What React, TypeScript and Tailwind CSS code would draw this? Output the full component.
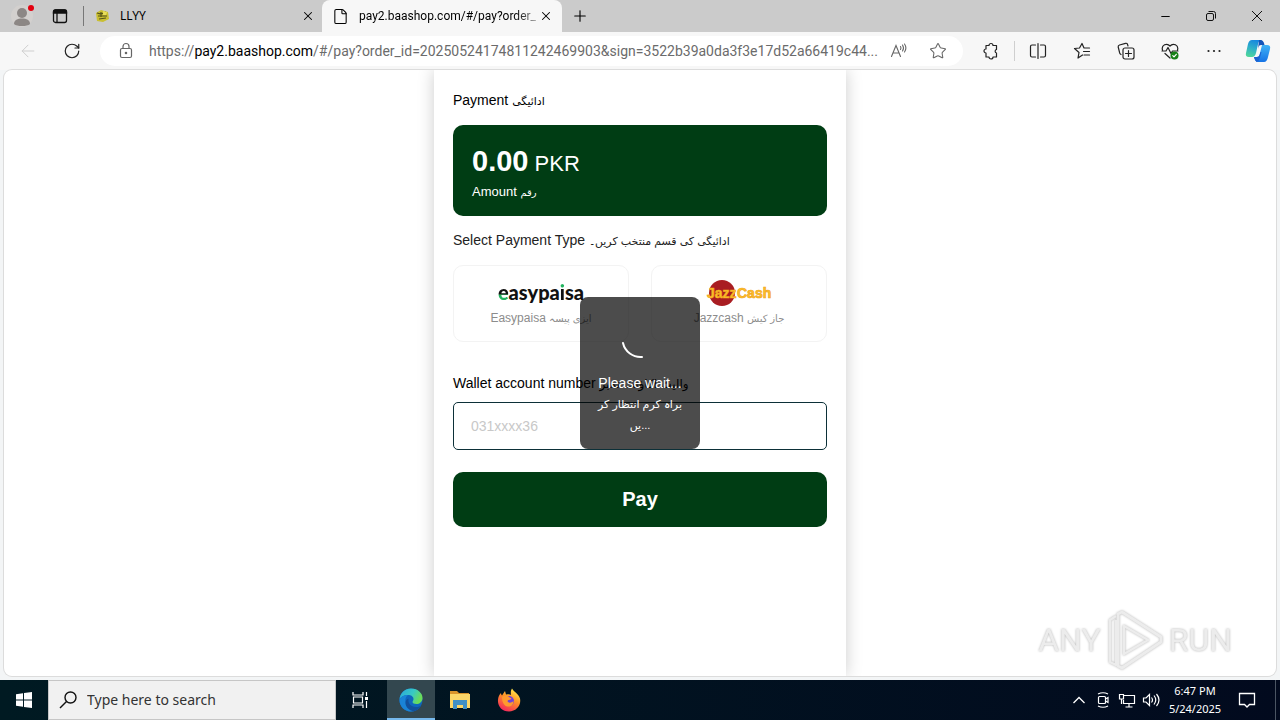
import type { ReactNode } from "react";
import { ArrowLeft, File, Minus, Plus, RotateCw, Star, X } from "lucide-react";

const ui = "font-['Noto_Sans','Open_Sans',sans-serif]";
const app = "font-['Liberation_Sans','DejaVu_Sans',sans-serif]";

function Urdu({ children, className = "text-xs" }: { children: ReactNode; className?: string }) {
  return (
    <span lang="ur" className={className}>
      {children}
    </span>
  );
}

function TitleBar() {
  return (
    <header className="flex h-8 shrink-0 items-stretch bg-[#cbcbcb] text-black">
      <button aria-label="Profile" className="flex w-11 items-center justify-center">
        <svg width="24" height="24" viewBox="0 0 24 24">
          <circle cx="12" cy="12" r="11" fill="#d3d0ce" />
          <circle cx="12" cy="9" r="5" fill="#8c8785" />
          <path d="M4 20c0-4 3.500-5.500 8-5.500s8 1.500 8 5.500c-2.500 2.700-13.500 2.700-16 0z" fill="#8c8785" />
          <circle cx="21" cy="4" r="3" fill="#e3000f" />
        </svg>
      </button>
      <button aria-label="Tab actions" className="flex w-8 items-center justify-center">
        <svg width="16" height="16" viewBox="0 0 16 16" fill="none" stroke="#111" strokeWidth="1.300">
          <rect x="1.500" y="2" width="13" height="12.500" rx="2" />
          <path d="M1.500 3.500q0-1.500 2-1.500h9q2 0 2 1.500V5h-13z" fill="#111" />
          <path d="M5 5v9.500" />
        </svg>
      </button>
      <div className="my-1.5 ml-[7px] w-px bg-[#777]" />
      <div role="tablist" className="flex">
        <div className="flex w-[238px] items-center pr-1.5 pl-2.5">
          <svg width="16" height="16" viewBox="0 0 16 16">
            <path d="M2 5l5-3 7 2 1 7-6 3-6-1z" fill="#c9bf32" />
            <path d="M3 5l4 1 5-2M4 8h9M5 11l7-1M7 4v5" stroke="#55531a" strokeWidth="1.200" fill="none" />
            <path d="M9 3l4 1-1 3-3 0z" fill="#e8dd59" />
          </svg>
          <button role="tab" aria-selected="false" className="ml-2.5 flex-1 text-left text-xs">
            LLYY
          </button>
          <button aria-label="Close LLYY" className="flex size-4 items-center justify-center">
            <X size={14} strokeWidth={1.8} />
          </button>
        </div>
        <div className="flex w-[240px] items-center rounded-t-lg bg-[#f7f7f7] pr-2 pl-2.5">
          <File size={17} strokeWidth={1.5} />
          <button
            role="tab"
            aria-selected="true"
            className="ml-2.5 flex-1 bg-linear-to-r from-black from-85% to-[#bbb] bg-clip-text text-left font-['Roboto',sans-serif] text-xs whitespace-nowrap text-transparent"
          >
            pay2.baashop.com/#/pay?order_
          </button>
          <button aria-label="Close tab" className="flex size-4 items-center justify-center">
            <X size={14} strokeWidth={1.8} />
          </button>
        </div>
      </div>
      <button aria-label="New tab" className="flex w-9 items-center justify-center">
        <Plus size={18} strokeWidth={1.5} />
      </button>
      <div className="flex-1" />
      <button aria-label="Minimize" className="flex w-[46px] items-center justify-center">
        <Minus size={13} strokeWidth={1.8} />
      </button>
      <button aria-label="Restore" className="flex w-[46px] items-center justify-center">
        <svg width="12" height="12" viewBox="0 0 12 12" fill="none" stroke="#111">
          <rect x="1.500" y="3.500" width="7" height="7" rx="1.500" />
          <path d="M3.500 1.500h5q2 0 2 2v5" />
        </svg>
      </button>
      <button aria-label="Close" className="flex w-[46px] items-center justify-center">
        <svg width="12" height="12" viewBox="0 0 12 12" stroke="#111">
          <path d="M1 1l10 10M11 1L1 11" />
        </svg>
      </button>
    </header>
  );
}

function ToolButton({ label, children }: { label: string; children: ReactNode }) {
  return (
    <button aria-label={label} className="flex w-11 shrink-0 items-center justify-center">
      <svg width="18" height="18" viewBox="0 0 18 18" fill="none" stroke="#222" strokeWidth="1.200" strokeLinejoin="round" strokeLinecap="round">
        {children}
      </svg>
    </button>
  );
}

function Toolbar() {
  return (
    <nav className="flex h-[38px] shrink-0 items-center bg-[#f7f7f7]">
      <button aria-label="Back" className="ml-1.5 flex w-11 shrink-0 items-center justify-center text-[#cfcfcf]">
        <ArrowLeft size={20} strokeWidth={1.2} />
      </button>
      <button aria-label="Refresh" className="flex w-11 shrink-0 items-center justify-center text-[#222]">
        <RotateCw size={18} strokeWidth={1.6} />
      </button>
      <div className="ml-1.5 flex h-[30px] min-w-0 flex-1 items-center rounded-full bg-white pr-4 pl-[18px]">
        <svg width="16" height="18" viewBox="0 0 16 18" fill="none" stroke="#666" strokeWidth="1.200" className="shrink-0">
          <rect x="2.500" y="6.500" width="11" height="9" rx="1.500" />
          <path d="M5 6.500V4.500a3 3 0 0 1 6 0v2" />
          <circle cx="8" cy="11" r=".7" fill="#666" />
        </svg>
        <div
          role="textbox"
          aria-label="Address"
          className="ml-[15px] min-w-0 flex-1 font-['Roboto',sans-serif] text-sm whitespace-nowrap text-[#6b6b6b]"
        >
          https://<span className="text-black">pay2.baashop.com</span>
          /#/pay?order_id=20250524174811242469903&amp;sign=3522b39a0da3f3e17d52a66419c44...
        </div>
        <button aria-label="Read aloud" className="flex w-8 shrink-0 items-center justify-center">
          <svg width="18" height="16" viewBox="0 0 18 16" fill="none" stroke="#666" strokeWidth="1.100" strokeLinecap="round">
            <path d="M1.500 13.500L6 2.500l4.500 11M3 10h6M10.500 3.500q1 1.500 0 3M12.500 2q2 3 0 6M14.500 1q2.800 4 0 8" />
          </svg>
        </button>
        <button aria-label="Add to favorites" className="ml-3.5 flex items-center text-[#666]">
          <Star size={18} strokeWidth={1.4} />
        </button>
      </div>
      <div className="ml-1.5 flex">
        <ToolButton label="Extensions">
          <path d="M4 3.500h3a2 2 0 0 1 4 0h3.500v4a1.800 1.800 0 0 0 0 3.500v4H11a2 2 0 0 1-4 0H4v-4a2 2 0 0 1 0-4z" />
        </ToolButton>
      </div>
      <div className="mx-px h-5 w-px bg-[#cfcfcf]" />
      <div className="flex">
        <ToolButton label="Split screen">
          <path d="M6.500 3H3q-1.500 0-1.500 1.500v9Q1.500 15 3 15h3.500M9 1.500v15M11.500 3H15q1.500 0 1.500 1.500v9q0 1.500-1.500 1.500h-3.500" />
        </ToolButton>
        <ToolButton label="Favorites">
          <path d="M9.500 13L5 16l1-5.500L1.500 6.500l5-.5L9 1.500 11 6h5.500M10.500 9.500h6M11 13h5.500" />
        </ToolButton>
        <ToolButton label="Collections">
          <rect x="6" y="6" width="11" height="11" rx="2" />
          <path d="M11.500 8.500v6M8.500 11.500h6M4 12.500Q3 12 2.700 11L1.200 5Q1 3.500 2.500 3l6-1.700q1.500-.3 2 1L11 4" />
        </ToolButton>
        <ToolButton label="Browser essentials">
          <path d="M1.500 8C0 3 6 .5 9 4c3-3.500 9-1 7.500 4M4 11.500L9 16M1 9h4l2-3.500 3 6L11.500 9H17" />
          <circle cx="13.500" cy="13.500" r="4" fill="#188018" stroke="none" />
          <path d="M11.800 13.600l1.200 1.200 2.300-2.500" stroke="#fff" />
        </ToolButton>
        <ToolButton label="Settings and more">
          <g fill="#222" stroke="none">
            <circle cx="3.500" cy="9" r="1.100" />
            <circle cx="9" cy="9" r="1.100" />
            <circle cx="14.500" cy="9" r="1.100" />
          </g>
        </ToolButton>
        <button aria-label="Copilot" className="flex w-11 items-center justify-center">
          <svg width="26" height="24" viewBox="0 0 26 24">
            <defs>
              <linearGradient id="cpl" x1=".6" y1="0" x2=".3" y2="1">
                <stop offset="0" stopColor="#1687df" />
                <stop offset=".5" stopColor="#2fb0c8" />
                <stop offset="1" stopColor="#4fd69b" />
              </linearGradient>
              <linearGradient id="cpr" x1="0" y1="0" x2="0" y2="1">
                <stop offset="0" stopColor="#4bc5fa" />
                <stop offset="1" stopColor="#1673e5" />
              </linearGradient>
            </defs>
            <path d="M15 1q3 0 4 5h3q4 0 3 4l-2 8q-1 5-4 5h-6q-3 0-4-5h3q2 0 2.500-2L17 6z" fill="url(#cpr)" />
            <path d="M7 1h9q-2 0-2.700 3L11 14q-1 4-4 4H4q-4 0-3-4l2-9q1-4 4-4z" fill="url(#cpl)" />
            <path d="M14 1h1.500q3 0 4 5H16q-2 0-2.500 2L13 10z" fill="#1554b8" />
            <path d="M9 18h3q2 0 2.500-2l1-3 1 0-2 7q-1 3-3 3-1.500-1-2.500-5z" fill="#1c62cf" />
          </svg>
        </button>
      </div>
    </nav>
  );
}

function PaymentPage() {
  return (
    <main className={`${app} min-h-full w-[412px] bg-white px-[19px] pt-5 text-sm text-black shadow-[0_0_16px_rgba(0,0,0,0.2)]`}>
      <h1 className="h-5 leading-5">
        Payment <Urdu className="text-[11px]">ادائیگی</Urdu>
      </h1>
      <section className="mt-[15px] h-[91px] rounded-[10px] bg-[#003d14] px-[19px] pt-[18px] text-white">
        <p className="h-9 text-[22px] leading-9">
          <strong className="text-[29px]">0.00</strong> PKR
        </p>
        <p className="mt-[3px] text-[13px] leading-5">
          Amount <Urdu className="text-[10px]">رقم</Urdu>
        </p>
      </section>
      <h2 className="mt-3.5 h-5 leading-5 whitespace-nowrap text-[#222]">
        Select Payment Type <Urdu className="text-[11px]">ادائیگی کی قسم منتخب کریں۔</Urdu>
      </h2>
      <div className="mt-[15px] grid grid-cols-2 gap-[22px] text-xs text-[#8c8c8c]">
        <button className="flex h-[77px] flex-col items-center rounded-[10px] border border-[#f3f3f3] pt-2.5">
          <span className="flex h-8 items-center font-['Lato',sans-serif] text-xl leading-8 font-black text-[#111]">
            <span className="bg-linear-to-b from-[#111] from-55% to-[#22b35e] to-60% bg-clip-text text-transparent">e</span>
            asypa
            <span className="bg-linear-to-b from-[#22b35e] from-40% to-[#111] to-42% bg-clip-text text-transparent">i</span>
            sa
          </span>
          <span className="mt-0.5 leading-4 whitespace-nowrap">
            Easypaisa <Urdu className="text-[10px]">ایزی پیسہ</Urdu>
          </span>
        </button>
        <button className="flex h-[77px] flex-col items-center rounded-[10px] border border-[#f3f3f3] pt-3">
          <svg width="68" height="32" viewBox="0 0 68 32">
            <circle cx="17" cy="15" r="13" fill="#a91d22" />
            <g fontFamily="Liberation Sans, sans-serif" fontWeight="bold" fontSize="14" fill="#fcc32c" stroke="#f2a51d" strokeWidth=".7">
              <text x="2" y="20">Jazz</text>
              <text x="32" y="20" fontSize="14">Cash</text>
            </g>
          </svg>
          <span className="leading-4 whitespace-nowrap">
            Jazzcash <Urdu className="text-[10px]">جاز کیش</Urdu>
          </span>
        </button>
      </div>
      <label htmlFor="wallet" className="mt-[31px] block h-5 leading-5 whitespace-nowrap">
        Wallet account number <Urdu className="text-xs">والیٹ اکاؤنٹ نمبر</Urdu>
      </label>
      <input
        id="wallet"
        placeholder="031xxxx36"
        className="mt-[9px] block h-12 w-full rounded-[5px] border border-[#0c3038] px-[17px] text-sm placeholder:text-[#c8c8c8]"
      />
      <button className="mt-[22px] block h-[55px] w-full rounded-[10px] bg-[#003d14] pb-0.5 text-xl font-bold text-white">Pay</button>
    </main>
  );
}

function LoadingToast() {
  return (
    <div className="absolute inset-0 flex items-center justify-center">
      <div role="status" className={`${app} flex h-38 w-30 flex-col items-center rounded-lg bg-black/70 pt-8 text-center text-sm leading-5 text-white`}>
        <svg width="36" height="36" viewBox="0 0 36 36" fill="none" stroke="#fff" strokeWidth="2" strokeLinecap="round" className="shrink-0">
          <path d="M1 14A18 18 0 0 0 20 28" />
        </svg>
        <p className="mt-2">Please wait...</p>
        <p className="whitespace-nowrap">
          <Urdu className="text-[11px]">
            براہ کرم انتظار کر
            <br />
            یں...
          </Urdu>
        </p>
      </div>
    </div>
  );
}

function Watermark() {
  return (
    <div className="pointer-events-none absolute right-11 bottom-1 flex items-center gap-1.5 font-['Roboto','Liberation_Sans',sans-serif] text-[32px] text-[#ececec] drop-shadow-[0_0_1px_rgba(0,0,0,0.3)]">
      <span>ANY</span>
      <svg width="56" height="64" viewBox="0 0 56 64" fill="none" stroke="#ececec" strokeWidth="3" strokeLinejoin="round">
        <path d="M15 4l39 25v5L15 60l-4-2V6z" />
        <path d="M9 8L3 12v42l6 3V12M17 18l24 14-24 14z" strokeWidth="2.500" />
      </svg>
      <span>RUN</span>
    </div>
  );
}

function Taskbar() {
  return (
    <footer className="flex h-10 shrink-0 items-stretch bg-linear-to-r from-[#001a22] to-[#020a1e] text-white">
      <button aria-label="Start" className="flex w-12 items-center justify-center">
        <svg width="16" height="16" viewBox="0 0 16 16" fill="#fff">
          <path d="M0 2.300L7 1.300v6.200H0zM8 1.100L16 0v7.500H8zM0 8.500h7v6.200l-7-1zM8 8.500h8V16l-8-1.100z" />
        </svg>
      </button>
      <label className="flex w-72 items-center border border-[#c6c6c6] bg-[#f1f1f1] pl-2.5">
        <svg width="20" height="20" viewBox="0 0 20 20" fill="none" stroke="#111" strokeWidth="1.400">
          <circle cx="11.500" cy="7.500" r="5.500" />
          <path d="M7.500 11.500L1 18" />
        </svg>
        <input
          aria-label="Search"
          placeholder="Type here to search"
          className="ml-2 min-w-0 flex-1 bg-transparent text-sm placeholder:text-[#333]"
        />
      </label>
      <button aria-label="Task view" className="flex w-[51px] items-center justify-center pr-1">
        <svg width="18" height="18" viewBox="0 0 18 18" fill="none" stroke="#fff" strokeWidth="1.200">
          <path d="M2 1v3h10V1M2 17v-3h10v3M2.500 6h9v6h-9zM15.500 1v4M15.500 10v7" />
          <path d="M14 6h3v3h-3z" fill="#fff" stroke="none" />
        </svg>
      </button>
      <button aria-label="Microsoft Edge" className="flex w-12 items-center justify-center border-b-2 border-[#76b9ed] bg-[#33474f] pt-0.5">
        <svg width="24" height="24" viewBox="0 0 24 24">
          <defs>
            <linearGradient id="edg" x1="0" y1="0" x2="1" y2=".4">
              <stop offset="0" stopColor="#2aa7dc" />
              <stop offset=".6" stopColor="#38c9c4" />
              <stop offset="1" stopColor="#6bdc58" />
            </linearGradient>
          </defs>
          <circle cx="12" cy="12" r="11.500" fill="#0f66bd" />
          <path d="M.5 11.500C1 5 6 .5 12 .5c7 0 12 5 11.500 10-.3 3.500-3 5.500-6 5.500-2.500 0-4-1-4-2 0-.8 1-1.200 1-3C14.500 8.500 12 7 9 7 5 7 1.500 9 .5 11.500z" fill="url(#edg)" />
          <path d="M.5 11.500C2 8.500 5 7 9 7c-2 1.500-3 4-2.500 7 .7 4.500 4 8 8.500 9C7 25 0 19 .5 11.500z" fill="#1a83d6" />
          <path d="M9.500 10.500c-1 5 3 9 8 8.500 2 0 3.500-.7 5-1.500-2 3-4.500 5-8 5.700-4.500-.7-8-4.200-8-8.200 0-2 1-3.800 3-4.500z" fill="#12509b" />
        </svg>
      </button>
      <button aria-label="File Explorer" className="flex w-[50px] items-center justify-center">
        <svg width="22" height="20" viewBox="0 0 22 20">
          <path d="M1 1h7l2 2h10v4H1z" fill="#d9942b" />
          <path d="M1 4h20v14H1z" fill="#fbd668" />
          <path d="M4 10h14v9h-4v-4H8v4H4z" fill="#3f8fc6" />
        </svg>
      </button>
      <button aria-label="Firefox" className="flex w-12 items-center justify-center">
        <svg width="24" height="24" viewBox="0 0 24 24">
          <defs>
            <linearGradient id="ffx" x1=".8" y1="0" x2=".3" y2="1">
              <stop offset="0" stopColor="#fff44f" />
              <stop offset=".45" stopColor="#ff9227" />
              <stop offset="1" stopColor="#f4255d" />
            </linearGradient>
          </defs>
          <path d="M4 5c0 1 .5 2 1 2.500L8 3l1 3.500c2-.5 4-.5 5 .5-.5-3 0-5 1-6.500 1.500 3 6.500 5 8 10 1.500 7-4 13-11 13S.5 18 1 12c.2-3 1-5 3-7z" fill="url(#ffx)" />
          <circle cx="12" cy="13" r="5" fill="#7141d9" />
          <path d="M5 9c2-2 5-2 7 0 1 1 2 1 2.500 1.500-1 1.500-3 1-4 2.500.5 2 3.500 2.500 6 0 0 4-3 6-6 5.500S5 15 5 9z" fill="#ff9a2e" />
        </svg>
      </button>
      <div className="flex-1" />
      <div className="flex items-center gap-1.5">
        <svg width="18" height="18" viewBox="0 0 18 18" fill="none" stroke="#fff" strokeWidth="1.300">
          <path d="M3.500 12L9 6.500l5.500 5.500" />
        </svg>
        <svg width="18" height="18" viewBox="0 0 18 18" fill="none" stroke="#fff" strokeWidth="1.200">
          <rect x="4.500" y="5.500" width="7" height="7" rx="1" />
          <path d="M11.500 8l2.500-1.500v5L11.500 10M4 3q5-2.500 10 0M4 15q5 2.500 10 0" />
        </svg>
        <svg width="18" height="18" viewBox="0 0 18 18" fill="none" stroke="#fff" strokeWidth="1.200">
          <path d="M6 4.500h10.500v8H5.500V9M11 12.500V16M7.500 16h7M1.500 3.500h4V8h-4zM3.500 8v5" />
        </svg>
        <svg width="18" height="18" viewBox="0 0 18 18" fill="none" stroke="#fff" strokeWidth="1.200">
          <path d="M1.500 7h2.500l3.500-3.500v11L4 11H1.500zM9.500 6.500q2 2.500 0 5M12 4.500q3.500 4.500 0 9M14.500 3q5 6 0 12" />
        </svg>
      </div>
      <div className="flex w-[70px] flex-col justify-center text-center text-[11px] leading-[18px]">
        <time>6:47 PM</time>
        <time>5/24/2025</time>
      </div>
      <button aria-label="Notifications" className="flex w-[46px] items-center justify-center border-r border-[#4b5563] pr-3">
        <svg width="18" height="18" viewBox="0 0 18 18" fill="none" stroke="#fff" strokeWidth="1.300">
          <path d="M1.500 2.500h15v11h-5L9 16l-2.500-2.500h-5z" />
        </svg>
      </button>
      <div className="w-1" />
    </footer>
  );
}

export default function App() {
  return (
    <div className={`${ui} flex h-screen flex-col bg-[#f3f5f6]`}>
      <TitleBar />
      <Toolbar />
      <div className="relative mx-1 mb-1 flex min-h-0 flex-1 justify-center overflow-hidden rounded-lg bg-white ring-1 ring-[#dcdcdc]">
        <PaymentPage />
        <LoadingToast />
        <Watermark />
      </div>
      <Taskbar />
    </div>
  );
}
